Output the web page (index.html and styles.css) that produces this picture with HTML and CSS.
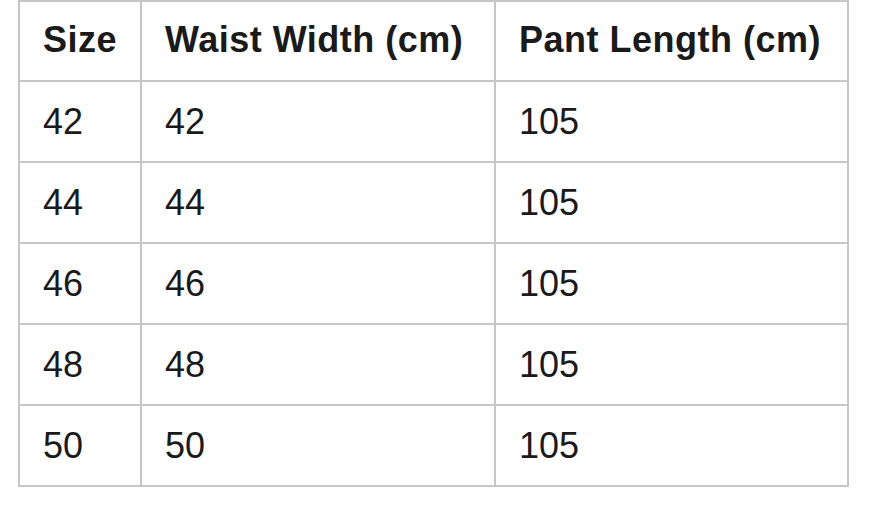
FILE: index.html
```html
<!DOCTYPE html>
<html>
<head>
<meta charset="utf-8">
<link rel="stylesheet" href="styles.css">
</head>
<body>
<table class="size-table">
  <colgroup>
    <col class="c1"><col class="c2"><col class="c3">
  </colgroup>
  <thead>
    <tr><th>Size</th><th>Waist Width (cm)</th><th>Pant Length (cm)</th></tr>
  </thead>
  <tbody>
    <tr><td>42</td><td>42</td><td>105</td></tr>
    <tr><td>44</td><td>44</td><td>105</td></tr>
    <tr><td>46</td><td>46</td><td>105</td></tr>
    <tr><td>48</td><td>48</td><td>105</td></tr>
    <tr><td>50</td><td>50</td><td>105</td></tr>
  </tbody>
</table>
</body>
</html>
```
FILE: styles.css
```css
html, body {
  margin: 0;
  padding: 0;
  background: #ffffff;
}
body {
  padding-left: 18px;
  font-family: "Liberation Sans", Arial, sans-serif;
  color: #1a1a1a;
}
.size-table {
  border-collapse: collapse;
  table-layout: fixed;
  width: 829px;
}
.c1 { width: 122px; }
.c2 { width: 354px; }
.c3 { width: 353px; }
.size-table th,
.size-table td {
  border: 2px solid #c6c6c6;
  height: 81px;
  padding: 0 0 0 23px;
  text-align: left;
  vertical-align: middle;
  font-size: 36px;
  box-sizing: border-box;
  white-space: nowrap;
}
.size-table th {
  height: 80px;
  font-weight: 700;
  letter-spacing: 0.5px;
  padding-bottom: 3px;
}
.size-table td {
  font-weight: 400;
}
```
